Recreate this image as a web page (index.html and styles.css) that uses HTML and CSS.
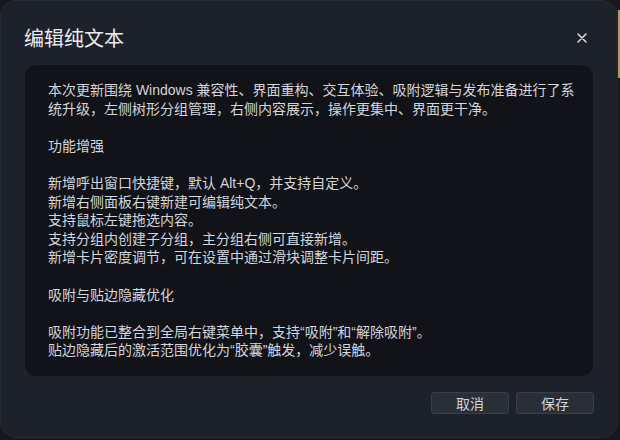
FILE: index.html
```html
<!DOCTYPE html>
<html lang="zh-CN">
<head>
<meta charset="utf-8">
<title>编辑纯文本</title>
<link rel="stylesheet" href="styles.css">
</head>
<body>
<div class="edge-strip"></div>
<div class="dialog">
  <div class="header">
    <div class="title">编辑纯文本</div>
    <button class="close" aria-label="关闭">
      <svg width="10" height="10" viewBox="0 0 10 10"><path d="M1 1L9 9M9 1L1 9" stroke="#e8ebf0" stroke-width="1.4" stroke-linecap="round"/></svg>
    </button>
  </div>
  <div class="editor">
    <p>本次更新围绕 Windows 兼容性、界面重构、交互体验、吸附逻辑与发布准备进行了系统升级，左侧树形分组管理，右侧内容展示，操作更集中、界面更干净。</p>
    <p class="gap">功能增强</p>
    <p class="gap">新增呼出窗口快捷键，默认 Alt+Q，并支持自定义。</p>
    <p>新增右侧面板右键新建可编辑纯文本。</p>
    <p>支持鼠标左键拖选内容。</p>
    <p>支持分组内创建子分组，主分组右侧可直接新增。</p>
    <p>新增卡片密度调节，可在设置中通过滑块调整卡片间距。</p>
    <p class="gap">吸附与贴边隐藏优化</p>
    <p class="gap">吸附功能已整合到全局右键菜单中，支持“吸附”和“解除吸附”。</p>
    <p>贴边隐藏后的激活范围优化为“胶囊”触发，减少误触。</p>
  </div>
  <div class="footer">
    <button class="btn">取消</button>
    <button class="btn">保存</button>
  </div>
</div>
</body>
</html>
```
FILE: styles.css
```css
* { box-sizing: border-box; }
html, body {
  margin: 0;
  padding: 0;
  width: 620px;
  height: 440px;
  background: #15181e;
  overflow: hidden;
  font-family: "Noto Sans CJK SC", "Noto Sans", sans-serif;
}
.edge-strip {
  position: absolute;
  left: 618px;
  top: 10px;
  width: 2px;
  height: 68px;
  background: #b59a55;
}
.dialog {
  width: 618px;
  height: 438px;
  background: #1d212a;
  border-radius: 16px;
  border: 1px solid #262a33;
  padding: 0 23px 23px 23px;
  display: flex;
  flex-direction: column;
}
.header {
  display: flex;
  align-items: center;
  justify-content: space-between;
  height: 63px;
  padding-top: 10px;
}
.title {
  font-size: 20px;
  line-height: 26px;
  color: #e9ebef;
}
.close {
  background: none;
  border: none;
  padding: 0;
  margin-right: 7px;
  width: 10px;
  height: 10px;
  display: flex;
  cursor: pointer;
}
.editor {
  background: #111318;
  border: 1px solid #1f232b;
  border-radius: 12px;
  padding: 16px 8px 17px 23px;
  height: 313px;
}
.editor p {
  margin: 0;
  font-family: "Liberation Sans", "Noto Sans CJK SC", sans-serif;
  font-size: 14px;
  line-height: 18.6px;
  color: #d3d6dc;
}
.editor p.gap {
  margin-top: 18.6px;
}
.footer {
  display: flex;
  justify-content: flex-end;
  gap: 7px;
  margin-top: 15px;
}
.btn {
  width: 78px;
  height: 22px;
  background: #2a2e37;
  border: 1px solid #3a3e47;
  border-radius: 3px;
  color: #cfd3da;
  font-family: "Noto Sans CJK SC", sans-serif;
  font-size: 14px;
  line-height: 18px;
  padding: 0;
}
```
